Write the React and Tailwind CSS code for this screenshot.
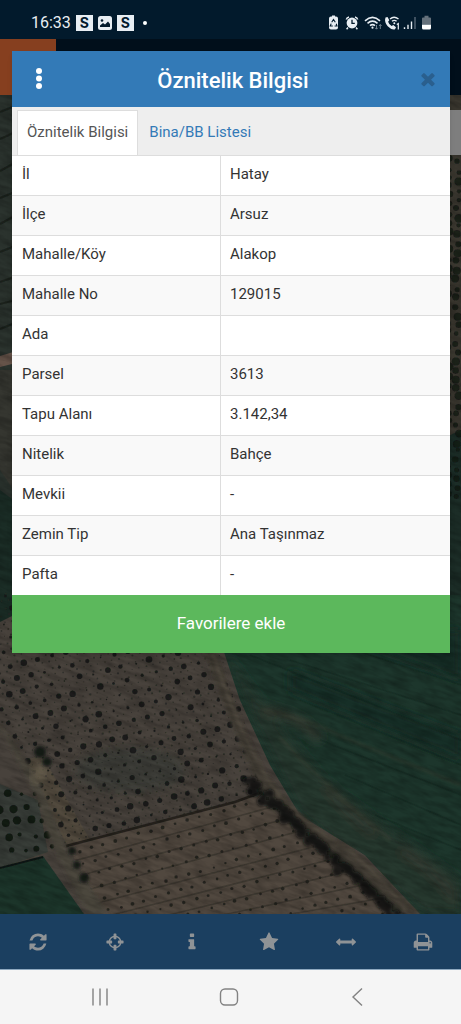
import React, { useState } from 'react';

const ROWS = [
  ['İl', 'Hatay'],
  ['İlçe', 'Arsuz'],
  ['Mahalle/Köy', 'Alakop'],
  ['Mahalle No', '129015'],
  ['Ada', ''],
  ['Parsel', '3613'],
  ['Tapu Alanı', '3.142,34'],
  ['Nitelik', 'Bahçe'],
  ['Mevkii', '-'],
  ['Zemin Tip', 'Ana Taşınmaz'],
  ['Pafta', '-'],
];

const TIMES =
  'M1490 1322q0 40-28 68l-136 136q-28 28-68 28t-68-28l-294-294-294 294q-28 28-68 28t-68-28l-136-136q-28-28-28-68t28-68l294-294-294-294q-28-28-28-68t28-68l136-136q28-28 68-28t68 28l294 294 294-294q28-28 68-28t68 28l136 136q28 28 28 68t-28 68l-294 294 294 294q28 28 28 68z';

const TOOLS = [
  {
    label: 'Yenile',
    path: 'M1639 1056q0 5-1 7-64 268-268 434.5t-478 166.5q-146 0-282.5-55t-243.5-157l-129 129q-19 19-45 19t-45-19-19-45v-448q0-26 19-45t45-19h448q26 0 45 19t19 45-19 45l-137 137q71 66 161 102t187 36q134 0 250-65t186-179q11-17 53-117 8-23 30-23h192q13 0 22.5 9.5t9.5 22.5zm25-800v448q0 26-19 45t-45 19h-448q-26 0-45-19t-19-45 19-45l138-138q-148-137-349-137-134 0-250 65t-186 179q-11 17-53 117-8 23-30 23h-199q-13 0-22.5-9.5t-9.5-22.5v-7q65-268 270-434.5t480-166.5q146 0 284 55.5t245 156.5l130-129q19-19 45-19t45 19 19 45z',
  },
  {
    label: 'Konum',
    path: 'M1325 1024h-109q-26 0-45-19t-19-45v-128q0-26 19-45t45-19h109q-32-108-112.5-188.5t-188.5-112.5v109q0 26-19 45t-45 19h-128q-26 0-45-19t-19-45v-109q-108 32-188.5 112.5t-112.5 188.5h109q26 0 45 19t19 45v128q0 26-19 45t-45 19h-109q32 108 112.5 188.5t188.5 112.5v-109q0-26 19-45t45-19h128q26 0 45 19t19 45v109q108-32 188.5-112.5t112.5-188.5zm339-192v128q0 26-19 45t-45 19h-143q-37 161-154.5 278.5t-278.5 154.5v143q0 26-19 45t-45 19h-128q-26 0-45-19t-19-45v-143q-161-37-278.5-154.5t-154.5-278.5h-143q-26 0-45-19t-19-45v-128q0-26 19-45t45-19h143q37-161 154.5-278.5t278.5-154.5v-143q0-26 19-45t45-19h128q26 0 45 19t19 45v143q161 37 278.5 154.5t154.5 278.5h143q26 0 45 19t19 45z',
  },
  {
    label: 'Bilgi',
    path: 'M1216 1344v128q0 26-19 45t-45 19h-512q-26 0-45-19t-19-45v-128q0-26 19-45t45-19h64v-384h-64q-26 0-45-19t-19-45v-128q0-26 19-45t45-19h384q26 0 45 19t19 45v576h64q26 0 45 19t19 45zm-128-1152v192q0 26-19 45t-45 19h-256q-26 0-45-19t-19-45v-192q0-26 19-45t45-19h256q26 0 45 19t19 45z',
  },
  {
    label: 'Favoriler',
    path: 'M1728 647q0 22-26 48l-363 354 86 500q1 7 1 20 0 21-10.5 35.5t-30.5 14.5q-19 0-40-12l-449-236-449 236q-22 12-40 12-21 0-31.5-14.5t-10.5-35.5q0-6 2-20l86-500-364-354q-25-27-25-48 0-37 56-46l502-73 225-455q19-41 49-41t49 41l225 455 502 73q56 9 56 46z',
  },
  {
    label: 'Ölçüm',
    path: 'M1792 896q0 26-19 45l-256 256q-19 19-45 19t-45-19-19-45v-128h-1024v128q0 26-19 45t-45 19-45-19l-256-256q-19-19-19-45t19-45l256-256q19-19 45-19t45 19 19 45v128h1024v-128q0-26 19-45t45-19 45 19l256 256q19 19 19 45z',
  },
  {
    label: 'Yazdır',
    path: 'M448 1536h896v-256h-896v256zm0-640h896v-384h-160q-40 0-68-28t-28-68v-160h-640v640zm1152 64q0-26-19-45t-45-19-45 19-19 45 19 45 45 19 45-19 19-45zm128 0v416q0 13-9.5 22.5t-22.5 9.5h-224v160q0 40-28 68t-68 28h-960q-40 0-68-28t-28-68v-160h-224q-13 0-22.5-9.5t-9.5-22.5v-416q0-79 56.5-135.5t135.5-56.5h64v-544q0-40 28-68t68-28h672q40 0 88 20t76 48l152 152q28 28 48 76t20 88v256h64q79 0 135.5 56.5t56.5 135.5z',
  },
];

const rand = (n) => {
  const v = Math.sin(n * 127.1 + 11.7) * 43758.5453;
  return v - Math.floor(v);
};

// Trees planted on a skewed grid: a is the step along a row, b the step to the next row
const plant = (x0, y0, a, b, na, nb, min, max, seed, jitter) => {
  const trees = [];
  for (let i = 0; i < na; i++) {
    for (let j = 0; j < nb; j++) {
      const n = seed + i * 97 + j * 13;
      trees.push({
        x: x0 + a[0] * i + b[0] * j + (rand(n) - 0.5) * jitter,
        y: y0 + a[1] * i + b[1] * j + (rand(n + 0.3) - 0.5) * jitter,
        r: min + rand(n + 0.6) * (max - min),
      });
    }
  }
  return trees;
};

const orchard = plant(-140, 560, [6.6, 12.6], [14, -3.4], 28, 30, 0.7, 3.4, 1, 2);
const saplings = plant(-143, 566, [3.3, 6.3], [7, -1.7], 56, 60, 0.5, 1.1, 400, 1);
const vineyard = plant(55, 858, [12, -3.4], [3.5, 12.5], 32, 14, 1.1, 1.9, 900, 2);
const hedge = plant(250, 780, [3.6, 3.3], [-3, 3], 48, 2, 1.5, 5.5, 1500, 7);
const corner = plant(-4, 795, [13, -1], [4, 14], 4, 5, 1.5, 4.5, 2100, 4);
const edgeTrees = plant(448, 160, [0, 9], [9, 3], 38, 2, 2, 4.5, 2600, 4);

const Trees = ({ items, fill, opacity }) => (
  <g fill={fill} opacity={opacity}>
    {items.map((t, i) => (
      <circle key={i} cx={t.x.toFixed(1)} cy={t.y.toFixed(1)} r={t.r.toFixed(1)} />
    ))}
  </g>
);

const SatelliteMap = () => (
  <svg
    className="absolute inset-0 h-full w-full"
    viewBox="0 95 461 819"
    preserveAspectRatio="xMidYMid slice"
    aria-hidden="true"
  >
    <defs>
      <filter id="grain" x="0" y="0" width="100%" height="100%">
        <feTurbulence type="fractalNoise" baseFrequency="0.05 0.2" numOctaves="4" seed="4" />
        <feColorMatrix values="0 0 0 0 0  0 0 0 0 0  0 0 0 0 0  1.5 0 0 0 -0.5" />
      </filter>
      <filter id="soft">
        <feGaussianBlur stdDeviation="0.7" />
      </filter>
      <filter id="softer">
        <feGaussianBlur stdDeviation="1.6" />
      </filter>
      <filter id="blend">
        <feGaussianBlur stdDeviation="5" />
      </filter>
      <clipPath id="orchardArea">
        <path d="M0 590H196L240 705L262 795L66 846L24 770L0 728Z" />
      </clipPath>
      <clipPath id="vineyardArea">
        <path d="M68 847L262 795L305 838L398 914H104Z" />
      </clipPath>
      <clipPath id="fieldArea">
        <path d="M205 595H461V914H420L365 855L300 815L270 765L240 700Z" />
      </clipPath>
    </defs>

    <rect y="95" width="461" height="819" fill="#48423c" />
    <path d="M0 95H20V500H0Z" fill="#2b332e" />
    <g stroke="#1b221e" strokeWidth="2" filter="url(#soft)">
      <path d="M0 112L20 104M0 139L20 130M0 171L20 160M0 198L20 190M0 224L20 213M0 252L20 244M0 282L20 275M0 304L20 299M0 329L20 321" />
    </g>
    <path d="M0 356L20 350V362L0 367Z" fill="#65524a" filter="url(#soft)" />
    <path d="M0 370H20V500L0 470Z" fill="#353630" />
    <path d="M0 490L20 505V612L0 622Z" fill="#1b2d26" />
    <path d="M440 95H461V480H440Z" fill="#3a372f" />
    <path d="M440 440L461 430V650H440Z" fill="#1c2d27" />
    <g filter="url(#soft)">
      <Trees items={edgeTrees} fill="#111714" opacity="0.75" />
    </g>

    <g clipPath="url(#orchardArea)">
      <ellipse cx="130" cy="770" rx="55" ry="22" fill="#3b3e39" opacity="0.8" filter="url(#blend)" />
      <path d="M20 762L68 846L90 840L42 755Z" fill="#514a3e" filter="url(#soft)" />
      <g filter="url(#soft)">
        <Trees items={saplings} fill="#282a25" opacity="0.8" />
        <Trees items={orchard} fill="#161b18" opacity="0.9" />
      </g>
    </g>

    <g clipPath="url(#fieldArea)">
      <path d="M200 595H461V914H200Z" fill="#1d362c" />
      <g filter="url(#blend)">
        <path d="M461 680L320 630H461ZM290 690L461 760V735L290 670Z" fill="#192f28" />
        <path d="M225 650L250 715L300 815L425 914H461V880Q385 825 330 785Q285 735 225 650Z" fill="#26382d" />
        <path d="M262 710Q300 715 320 740M325 785Q350 815 375 835M400 850Q435 870 455 900" fill="none" stroke="#343b31" strokeWidth="9" />
      </g>
      <g fill="none" stroke="#12251f" strokeWidth="1.5" opacity="0.4" filter="url(#soft)">
        <path d="M290 660L461 715M300 700L461 765M320 740L461 795M345 775L461 825M340 645L461 685M375 815L461 850M250 655L461 740" />
      </g>
      <path d="M262 710Q306 717 340 736L461 785M280 738Q340 800 390 840" fill="none" stroke="#414334" strokeWidth="3" opacity="0.4" filter="url(#softer)" />
    </g>

    <path d="M192 622L219 660Q238 720 265 772Q300 824 355 850L420 914H388L346 872Q290 826 262 790Q240 748 224 705Z" fill="#423e36" filter="url(#softer)" />
    <path d="M212 650Q229 705 252 750Q278 808 330 838Q370 862 406 910" fill="none" stroke="#565044" strokeWidth="3" opacity="0.7" filter="url(#softer)" />

    <g clipPath="url(#vineyardArea)">
      <path d="M60 790H400V914H60Z" fill="#51483f" />
      <g stroke="#38342d" strokeWidth="1.5" opacity="0.7" filter="url(#soft)">
        <path d="M70 862L290 802M75 877L310 812M80 892L325 824M90 905L340 840M100 918L356 853M140 922L370 866M190 922L386 880M240 923L400 895" />
      </g>
      <g filter="url(#soft)">
        <Trees items={vineyard} fill="#25241f" opacity="0.95" />
      </g>
    </g>
    <path d="M66 846L235 802L262 792" fill="none" stroke="#25221e" strokeWidth="2.5" filter="url(#soft)" />
    <path d="M256 788Q292 824 345 865L400 914" fill="none" stroke="#171a17" strokeWidth="7" opacity="0.6" filter="url(#softer)" />
    <g filter="url(#softer)">
      <Trees items={hedge} fill="#0c100e" opacity="0.8" />
    </g>

    <path d="M0 784L38 800L48 852L0 868Z" fill="#393d37" filter="url(#soft)" />
    <g filter="url(#soft)">
      <Trees items={corner} fill="#101613" opacity="0.9" />
    </g>
    <path d="M0 868L43 856L84 914H0Z" fill="#1f342b" filter="url(#soft)" />
    <path d="M0 868L43 857" stroke="#111814" strokeWidth="2" filter="url(#soft)" />
    <path d="M0 728Q20 765 38 800Q48 845 88 914H108L67 850Q50 805 36 776Q18 748 0 722Z" fill="#4b463c" filter="url(#softer)" />
    <ellipse cx="38" cy="774" rx="7" ry="10" fill="#696150" filter="url(#blend)" />
    <g fill="#161a17" filter="url(#softer)">
      <circle cx="72" cy="851" r="4" />
      <circle cx="77" cy="865" r="4" />
      <circle cx="84" cy="878" r="5" />
      <circle cx="40" cy="752" r="6" />
      <circle cx="47" cy="762" r="5" />
    </g>

    <g transform="rotate(20 230 504)">
      <rect x="-200" y="0" width="900" height="1100" filter="url(#grain)" opacity="0.32" />
    </g>
  </svg>
);

const Icon = ({ path, className }) => (
  <svg viewBox="0 0 1792 1792" className={className} fill="currentColor" aria-hidden="true">
    <path d={path} />
  </svg>
);

const StatusBar = () => (
  <div className="flex h-[39px] items-center justify-between bg-[#021a2c] pt-[7px] pr-[30px] pl-[31px] text-[#e8eef3]">
    <div className="flex items-center gap-[5px]">
      <span className="text-[16px] leading-5">16:33</span>
      <span className="flex h-4 w-[17px] items-center justify-center bg-[#e8eef3] font-[Inter] text-[14px] leading-4 font-bold text-[#021a2c]">S</span>
      <svg viewBox="0 0 14 14" className="h-[14px] w-[14px]" aria-hidden="true">
        <rect width="14" height="14" rx="2.5" fill="#e8eef3" />
        <circle cx="4" cy="4.5" r="1.3" fill="#021a2c" />
        <path d="M2 11V9.5L5 7L7 8.5L10 5.5L12 8V11Z" fill="#021a2c" />
      </svg>
      <span className="flex h-4 w-[17px] items-center justify-center bg-[#e8eef3] font-[Inter] text-[14px] leading-4 font-bold text-[#021a2c]">S</span>
      <span className="ml-1 h-1 w-1 rounded-full bg-white" />
    </div>
    <svg viewBox="0 0 103 16" className="h-4 w-[103px]" fill="none" stroke="#e8eef3" aria-hidden="true">
      {/* battery saver */}
      <path d="M3 1.5h1V.5h3v1h1q2 0 2 2v9q0 2-2 2H3q-2 0-2-2v-9q0-2 2-2Z" fill="#e8eef3" stroke="none" />
      <path d="M3.7 7.2L5.5 4.5L7.3 7.2M8.2 8.8L9 11H6.6M4.8 11H2.2L3.2 8.6" stroke="#021a2c" strokeWidth="1.1" />
      {/* alarm */}
      <circle cx="24" cy="8" r="5.4" fill="#e8eef3" stroke="none" />
      <path d="M18.3 4.5Q18.6 2.6 21 2M29.7 4.5Q29.4 2.6 27 2M20 12.6L18.6 14.2M28 12.6L29.4 14.2" strokeWidth="1.5" />
      <path d="M24 4.8V8.4H26.8" stroke="#021a2c" strokeWidth="1.3" />
      {/* wifi */}
      <path d="M37 5.8Q44.5 -1 52 5.8M39.5 8.3Q44.5 4 49.5 8.3M42 10.6Q44.5 8.6 47 10.6" strokeWidth="1.6" />
      <circle cx="44.5" cy="12.7" r="1.1" fill="#e8eef3" stroke="none" />
      <path d="M48.5 10V14M47.2 12.8L48.5 14.2L49.8 12.8M52.3 14V9.5M51 11L52.3 9.5L53.6 11" stroke="#70808d" />
      {/* wifi call */}
      <path d="M57.5 2.5L59.5 2L61.3 5.3L60.1 6.7Q61 9.5 63.6 11L65.3 10L68 12.3L67 14.3Q63.5 15.2 59.7 11.3Q56 7 57.5 2.5Z" fill="#e8eef3" stroke="none" />
      <path d="M62 4Q66 .5 70.5 4M64 6.3Q66.3 4.4 68.6 6.3" strokeWidth="1.4" />
      <circle cx="66.3" cy="8.2" r="1" fill="#e8eef3" stroke="none" />
      <path d="M68.8 9.5L70.3 8.5V14.5" strokeWidth="1.2" />
      {/* signal */}
      <path d="M76.5 14V12.2M80 14V9.8M83.5 14V6.5" strokeWidth="1.4" />
      <path d="M87 14V2" stroke="#596977" strokeWidth="1.4" />
      {/* battery */}
      <path d="M95 2.500h1.500V.8h4V2.500H102q1 0 1 1V9H94V3.500q0-1 1-1Z" fill="#65717b" stroke="none" />
      <path d="M94 9.500h9V13q0 1.500-1.500 1.500h-6Q94 14.500 94 13Z" fill="#fff" stroke="none" />
    </svg>
  </div>
);

const AttributeDialog = () => {
  const [tab, setTab] = useState('info');
  const active = 'mt-[3px] border-x border-t border-[#ddd] bg-white px-[9px] pb-px text-[#555]';
  const passive = 'mt-[3px] border-x border-t border-transparent px-[10px] pb-px text-[#337ab7]';

  return (
    <section role="dialog" aria-label="Öznitelik Bilgisi" className="absolute top-3 right-[11px] left-3 bg-white shadow-md">
      <header className="flex h-14 items-center justify-between bg-[#337ab7] pr-3 pl-[18px]">
        <button type="button" aria-label="Menü" className="flex h-10 w-[18px] items-center justify-center text-white">
          <svg viewBox="0 0 6 22" className="h-[22px] w-[6px]" fill="currentColor" aria-hidden="true">
            <circle cx="3" cy="3" r="3" />
            <circle cx="3" cy="10.5" r="3" />
            <circle cx="3" cy="18" r="3" />
          </svg>
        </button>
        <h1 className="pt-1 text-[22px] leading-7 font-medium text-white">Öznitelik Bilgisi</h1>
        <button type="button" aria-label="Kapat" className="text-[#2a5f8e]">
          <Icon path={TIMES} className="h-5 w-5" />
        </button>
      </header>
      <div role="tablist" className="flex h-12 bg-[#eee] pl-[5px] text-[15px]">
        <button type="button" role="tab" aria-selected={tab === 'info'} onClick={() => setTab('info')} className={tab === 'info' ? active : passive}>
          Öznitelik Bilgisi
        </button>
        <button type="button" role="tab" aria-selected={tab === 'list'} onClick={() => setTab('list')} className={tab === 'list' ? active : passive}>
          Bina/BB Listesi
        </button>
      </div>
      <table className="w-full table-fixed border-separate border-spacing-0 text-[15px] leading-5 text-[#333]">
        <colgroup>
          <col className="w-[209px]" />
          <col />
        </colgroup>
        <tbody>
          {ROWS.map(([name, value]) => (
            <tr key={name} className="h-10 even:bg-[#f9f9f9]">
              <th scope="row" className="border-t border-r border-[#ddd] px-[10px] pb-[3px] text-left font-normal">{name}</th>
              <td className="border-t border-[#ddd] px-[9px] pb-[3px]">{value}</td>
            </tr>
          ))}
        </tbody>
      </table>
      <button type="button" className="h-[58px] w-full bg-[#5cb85c] pb-px text-[17px] text-white">
        Favorilere ekle
      </button>
    </section>
  );
};

const App = () => (
  <div className="flex min-h-screen flex-col bg-[#49433c] font-[Roboto,'Noto_Sans',sans-serif]">
    <StatusBar />
    <main className="relative flex flex-1 flex-col">
      <div className="h-14 bg-[#010f1b]">
        <div className="h-14 w-14 bg-[#863f1f]" />
      </div>
      <div className="relative min-h-[560px] flex-1 overflow-hidden">
        <SatelliteMap />
        <div className="absolute top-[15px] right-0 h-[45px] w-10 bg-[#7e7e7e]" />
      </div>
      <AttributeDialog />
    </main>
    <nav className="grid h-14 grid-cols-6 border-b border-[#8fa9c0] bg-[#1b3f60] text-[#8f9396]">
      {TOOLS.map((tool) => (
        <button key={tool.label} type="button" aria-label={tool.label} className="flex items-center justify-center">
          <Icon path={tool.path} className="h-5 w-5" />
        </button>
      ))}
    </nav>
    <div className="flex h-[54px] items-center justify-center gap-[109px] bg-[#f5f5f5] pr-1 text-[#828282]">
      <button type="button" aria-label="Son uygulamalar">
        <svg viewBox="0 0 20 20" className="h-5 w-5" fill="none" stroke="currentColor" strokeWidth="1.4" aria-hidden="true">
          <path d="M3 1.5V18.5M10 1.5V18.5M17 1.5V18.5" />
        </svg>
      </button>
      <button type="button" aria-label="Ana ekran">
        <svg viewBox="0 0 20 20" className="h-5 w-5" fill="none" stroke="currentColor" strokeWidth="1.4" aria-hidden="true">
          <rect x="1.5" y="2" width="17" height="16" rx="4.5" />
        </svg>
      </button>
      <button type="button" aria-label="Geri">
        <svg viewBox="0 0 20 20" className="h-5 w-5" fill="none" stroke="currentColor" strokeWidth="1.4" aria-hidden="true">
          <path d="M14 1.5L5 10L14 18.5" />
        </svg>
      </button>
    </div>
  </div>
);

export default App;
